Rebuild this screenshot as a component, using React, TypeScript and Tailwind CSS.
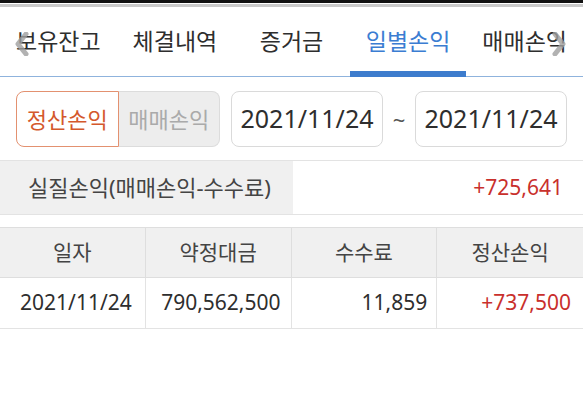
import { useState } from 'react';

const tabs = ['보유잔고', '체결내역', '증거금', '일별손익', '매매손익'];

const font = { fontFamily: '"Noto Sans", "Noto Sans CJK KR", sans-serif' };

function Chevron({ dir }: { dir: 'left' | 'right' }) {
  return (
    <svg width="14" height="24" viewBox="0 0 14 24" className="opacity-80">
      {dir === 'left' ? (
        <path d="M11 2 L3 12 L11 22" fill="none" stroke="#a0a0a0" strokeWidth="5" strokeLinecap="round" strokeLinejoin="round" />
      ) : (
        <path d="M3 2 L11 12 L3 22" fill="none" stroke="#a0a0a0" strokeWidth="5" strokeLinecap="round" strokeLinejoin="round" />
      )}
    </svg>
  );
}

export default function App() {
  const [active, setActive] = useState(3);
  const [mode, setMode] = useState(0);

  return (
    <div className="w-[583px] h-[418px] bg-white overflow-hidden text-[#2e2e2e]" style={font}>
      {/* status strip */}
      <div className="h-[3px] bg-[#111]" />
      <div className="h-[1px] bg-white" />
      <div className="h-[3px] bg-[#cacaca]" />

      {/* tabs */}
      <div className="relative flex h-[70px] border-b border-[#8fb3dd]">
        {tabs.map((t, i) => (
          <button
            key={t}
            onClick={() => setActive(i)}
            className={`relative flex-1 flex items-center justify-center text-[23px] ${
              i === active ? 'text-[#3b7dd2]' : 'text-[#2e2e2e]'
            }`}
          >
            {t}
            {i === active && <span className="absolute left-0 right-0 bottom-[-1px] h-[6px] bg-[#3d7ccd]" />}
          </button>
        ))}
        <div className="absolute left-[15px] top-[25px]">
          <Chevron dir="left" />
        </div>
        <div className="absolute right-[17px] top-[25px]">
          <Chevron dir="right" />
        </div>
      </div>

      {/* filter row */}
      <div className="flex items-center px-4 mt-[14px] h-[56px]">
        <div className="flex h-full w-[204px]">
          <button
            onClick={() => setMode(0)}
            className={`flex-1 flex items-center justify-center text-[22px] rounded-l-lg border ${
              mode === 0
                ? 'border-[#e39170] text-[#d4582c] bg-white'
                : 'border-[#dcdcdc] text-[#aaa] bg-[#ededed]'
            }`}
          >
            정산손익
          </button>
          <button
            onClick={() => setMode(1)}
            className={`flex-1 flex items-center justify-center text-[22px] rounded-r-lg border ${
              mode === 1
                ? 'border-[#e39170] text-[#d4582c] bg-white'
                : 'border-[#dcdcdc] border-l-0 text-[#aaa] bg-[#ededed]'
            }`}
          >
            매매손익
          </button>
        </div>
        <div className="ml-[11px] w-[152px] h-full flex items-center justify-center rounded-lg border border-[#dadada] text-[25px]">
          2021/11/24
        </div>
        <div className="w-[32px] text-center text-[22px] text-[#555]">~</div>
        <div className="w-[152px] h-full flex items-center justify-center rounded-lg border border-[#dadada] text-[25px]">
          2021/11/24
        </div>
      </div>

      {/* summary */}
      <div className="mt-[13px] flex h-[55px] border-y border-[#e3e3e3]">
        <div className="w-[293px] bg-[#f0f0f0] flex items-center pl-[28px] text-[22px] text-[#444]">
          실질손익(매매손익-수수료)
        </div>
        <div className="flex-1 flex items-center justify-end pr-[20px] text-[21px] text-[#c9302c]">
          +725,641
        </div>
      </div>

      {/* table */}
      <div className="mt-[12px] border-t border-[#dedede]">
        <div className="grid grid-cols-4 h-[50px] bg-[#f0f0f0] border-b border-[#dedede] text-[21px] text-[#444]">
          <div className="flex items-center justify-center border-r border-[#dedede]">일자</div>
          <div className="flex items-center justify-center border-r border-[#dedede]">약정대금</div>
          <div className="flex items-center justify-center border-r border-[#dedede]">수수료</div>
          <div className="flex items-center justify-center">정산손익</div>
        </div>
        <div className="grid grid-cols-4 h-[51px] border-b border-[#e3e3e3] text-[21px]">
          <div className="flex items-center justify-end pr-[13px] border-r border-[#e3e3e3]">2021/11/24</div>
          <div className="flex items-center justify-end pr-[10px] border-r border-[#e3e3e3]">790,562,500</div>
          <div className="flex items-center justify-end pr-[9px] border-r border-[#e3e3e3]">11,859</div>
          <div className="flex items-center justify-end pr-[12px] text-[#c9302c]">+737,500</div>
        </div>
      </div>
    </div>
  );
}
